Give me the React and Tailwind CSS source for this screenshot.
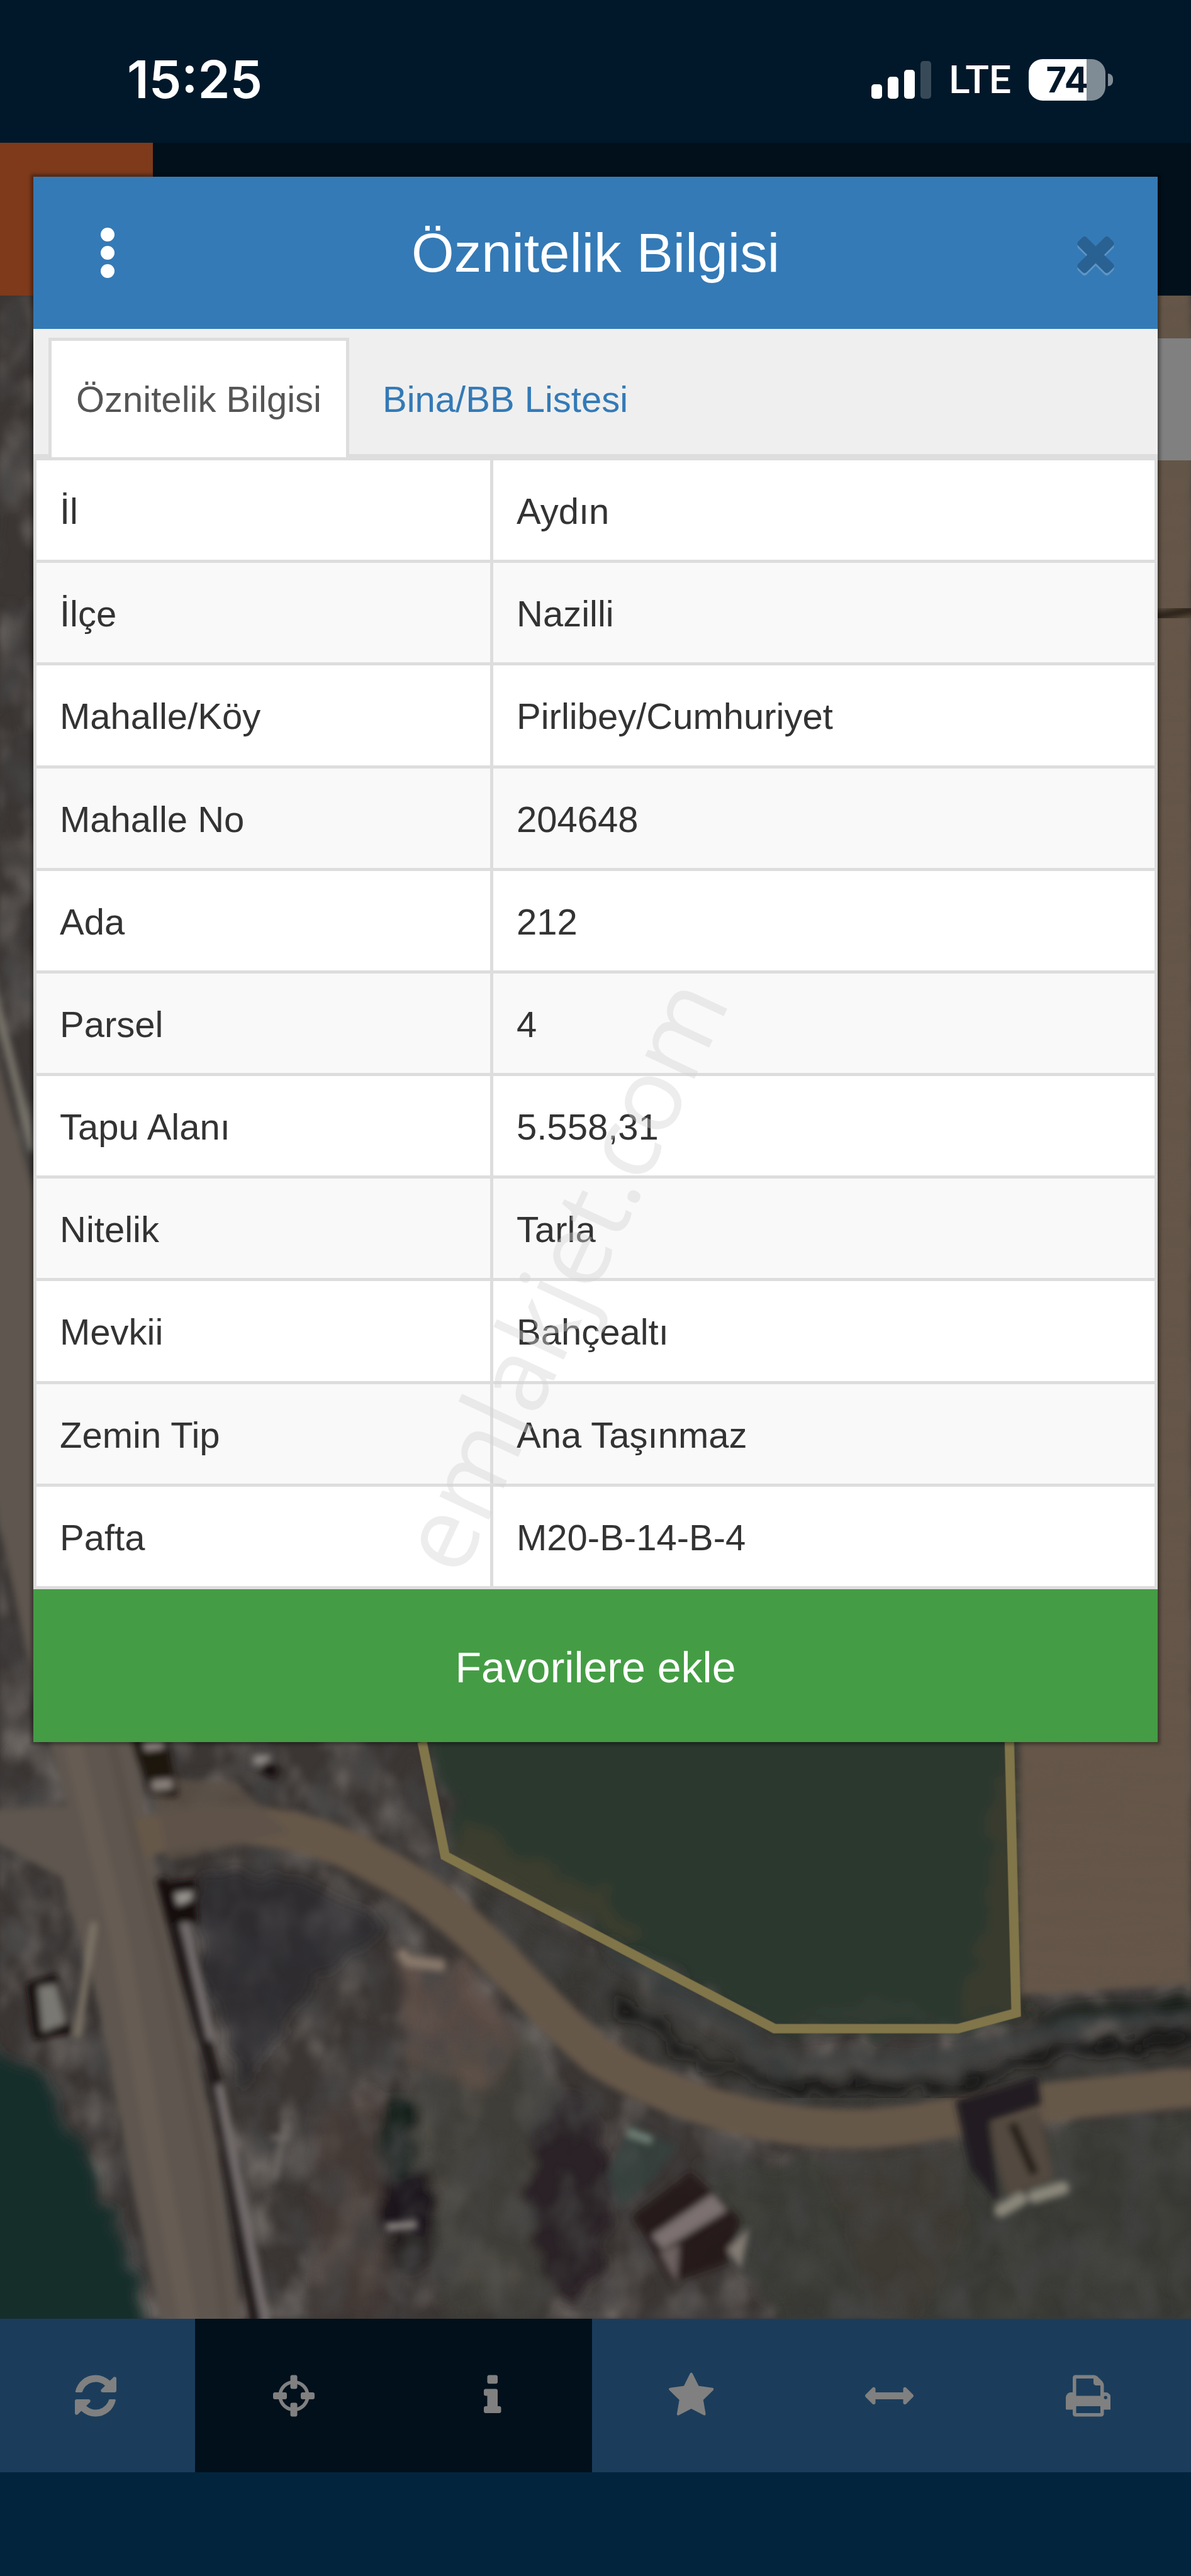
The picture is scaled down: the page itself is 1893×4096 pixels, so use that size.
import React, { useState } from 'react';

const ATTRIBUTES = [
  { label: 'İl', value: 'Aydın' },
  { label: 'İlçe', value: 'Nazilli' },
  { label: 'Mahalle/Köy', value: 'Pirlibey/Cumhuriyet' },
  { label: 'Mahalle No', value: '204648' },
  { label: 'Ada', value: '212' },
  { label: 'Parsel', value: '4' },
  { label: 'Tapu Alanı', value: '5.558,31' },
  { label: 'Nitelik', value: 'Tarla' },
  { label: 'Mevkii', value: 'Bahçealtı' },
  { label: 'Zemin Tip', value: 'Ana Taşınmaz' },
  { label: 'Pafta', value: 'M20-B-14-B-4' },
];

const TOOLS = [
  {
    name: 'Yenile',
    width: 1536,
    active: false,
    path: 'M1511 1056q0 5-1 7-64 268-268 434.5t-478 166.5q-146 0-282.5-55t-243.5-157l-129 129q-19 19-45 19t-45-19-19-45v-448q0-26 19-45t45-19h448q26 0 45 19t19 45-19 45l-137 137q71 66 161 102t187 36q134 0 250-65t186-179q11-17 53-117 8-23 30-23h192q13 0 22.5 9.5t9.5 22.5zm25-800v448q0 26-19 45t-45 19h-448q-26 0-45-19t-19-45 19-45l138-138q-148-137-349-137-134 0-250 65t-186 179q-11 17-53 117-8 23-30 23h-199q-13 0-22.5-9.5t-9.5-22.5v-7q65-268 270-434.5t480-166.5q146 0 284 55.5t245 156.5l130-129q19-19 45-19t45 19 19 45z',
  },
  {
    name: 'Konum',
    width: 1536,
    active: true,
    path: 'M1197 1024h-109q-26 0-45-19t-19-45v-128q0-26 19-45t45-19h109q-32-108-112.5-188.5t-188.5-112.5v109q0 26-19 45t-45 19h-128q-26 0-45-19t-19-45v-109q-108 32-188.5 112.5t-112.5 188.5h109q26 0 45 19t19 45v128q0 26-19 45t-45 19h-109q32 108 112.5 188.5t188.5 112.5v-109q0-26 19-45t45-19h128q26 0 45 19t19 45v109q108-32 188.5-112.5t112.5-188.5zm339-192v128q0 26-19 45t-45 19h-143q-37 161-154.5 278.5t-278.5 154.5v143q0 26-19 45t-45 19h-128q-26 0-45-19t-19-45v-143q-161-37-278.5-154.5t-154.5-278.5h-143q-26 0-45-19t-19-45v-128q0-26 19-45t45-19h143q37-161 154.5-278.5t278.5-154.5v-143q0-26 19-45t45-19h128q26 0 45 19t19 45v143q161 37 278.5 154.5t154.5 278.5h143q26 0 45 19t19 45z',
  },
  {
    name: 'Bilgi',
    width: 640,
    active: true,
    path: 'M640 1344v128q0 26-19 45t-45 19h-512q-26 0-45-19t-19-45v-128q0-26 19-45t45-19h64v-384h-64q-26 0-45-19t-19-45v-128q0-26 19-45t45-19h384q26 0 45 19t19 45v576h64q26 0 45 19t19 45zm-128-1152v192q0 26-19 45t-45 19h-256q-26 0-45-19t-19-45v-192q0-26 19-45t45-19h256q26 0 45 19t19 45z',
  },
  {
    name: 'Favoriler',
    width: 1664,
    active: false,
    path: 'M1664 647q0 22-26 48l-363 354 86 500q1 7 1 20 0 21-10.5 35.5t-30.5 14.5q-19 0-40-12l-449-236-449 236q-22 12-40 12-21 0-31.5-14.5t-10.5-35.5q0-6 2-20l86-500-364-354q-25-27-25-48 0-37 56-46l502-73 225-455q19-41 49-41t49 41l225 455 502 73q56 9 56 46z',
  },
  {
    name: 'Ölçüm',
    width: 1792,
    active: false,
    path: 'M1792 896q0 26-19 45l-256 256q-19 19-45 19t-45-19-19-45v-128h-1024v128q0 26-19 45t-45 19-45-19l-256-256q-19-19-19-45t19-45l256-256q19-19 45-19t45 19 19 45v128h1024v-128q0-26 19-45t45-19 45 19l256 256q19 19 19 45z',
  },
  {
    name: 'Yazdır',
    width: 1664,
    active: false,
    path: 'M384 1536h896v-256h-896v256zm0-640h896v-384h-160q-40 0-68-28t-28-68v-160h-640v640zm1152 64q0-26-19-45t-45-19-45 19-19 45 19 45 45 19 45-19 19-45zm128 0v416q0 13-9.5 22.5t-22.5 9.5h-224v160q0 40-28 68t-68 28h-960q-40 0-68-28t-28-68v-160h-224q-13 0-22.5-9.5t-9.5-22.5v-416q0-79 56.5-135.5t135.5-56.5h64v-544q0-40 28-68t68-28h672q40 0 88 20t76 48l152 152q28 28 48 76t20 88v256h64q79 0 135.5 56.5t56.5 135.5z',
  },
];

const CLOSE_PATH =
  'M1298 1322q0 40-28 68l-136 136q-28 28-68 28t-68-28l-294-294-294 294q-28 28-68 28t-68-28l-136-136q-28-28-28-68t28-68l294-294-294-294q-28-28-28-68t28-68l136-136q28-28 68-28t68 28l294 294 294-294q28-28 68-28t68 28l136 136q28 28 28 68t-28 68l-294 294 294 294q28 28 28 68z';

const App = () => {
  const [activeTab, setActiveTab] = useState('info');

  return (
    <div className="relative flex min-h-screen flex-col overflow-hidden bg-[#02253d] font-['Liberation_Sans',Arial,sans-serif]">
      <StatusBar />

      <div className="flex h-[243px] bg-[#01101b]">
        <div className="w-[243px] bg-[#7e3a1b]"></div>
      </div>

      <main className="relative flex flex-1 flex-col items-end pt-[68px]">
        <SatelliteMap />
        <div className="relative h-[194px] w-[243px] bg-[#808080]"></div>
      </main>

      <Toolbar />
      <div className="h-[165px]"></div>

      {/* ATTRIBUTE MODAL */}
      <div
        role="dialog"
        aria-labelledby="modal-title"
        className="absolute inset-x-[53px] top-[281px] bg-white shadow-[0_0_5px_4px_rgba(0,0,0,0.35)]"
      >
        <header className="flex h-[242px] items-center bg-[#347ab6]">
          <button aria-label="Menü" className="flex w-[236px] flex-col items-center gap-[7px]">
            <span className="size-[22px] rounded-full bg-white"></span>
            <span className="size-[22px] rounded-full bg-white"></span>
            <span className="size-[22px] rounded-full bg-white"></span>
          </button>
          <h1 id="modal-title" className="flex-1 text-center text-[87px] leading-[96px] text-white">
            Öznitelik Bilgisi
          </h1>
          <button aria-label="Kapat" className="flex w-[236px] justify-center pl-[38px]">
            <svg viewBox="0 0 1408 1792" className="h-[88px] w-[69px] shrink-0 overflow-visible">
              <path d={CLOSE_PATH} transform="translate(0 80)" fill="#5d95c5" />
              <path d={CLOSE_PATH} fill="#296192" />
            </svg>
          </button>
        </header>

        <nav className="flex h-[204px] items-end border-b-[5px] border-[#dddddd] bg-[#efefef] pl-[24px]">
          <TabButton active={activeTab === 'info'} onClick={() => setActiveTab('info')}>
            Öznitelik Bilgisi
          </TabButton>
          <TabButton active={activeTab === 'list'} onClick={() => setActiveTab('list')}>
            Bina/BB Listesi
          </TabButton>
        </nav>

        <table className="h-[1800px] w-full table-fixed border-collapse text-left text-[58px] leading-[72px] text-[#333333]">
          <colgroup>
            <col className="w-[726px]" />
            <col />
          </colgroup>
          <tbody>
            {ATTRIBUTES.map((row) => (
              <tr key={row.label} className="odd:bg-white even:bg-[#f9f9f9]">
                <th scope="row" className="border-[5px] border-[#dddddd] px-[37px] pt-[4px] font-normal">{row.label}</th>
                <td className="border-[5px] border-[#dddddd] px-[37px] pt-[4px]">{row.value}</td>
              </tr>
            ))}
          </tbody>
        </table>

        <button className="block h-[243px] w-full bg-[#449d44] pt-[4px] text-[68px] text-white">Favorilere ekle</button>

        <span className="pointer-events-none absolute top-[1744px] left-[837px] -translate-x-1/2 -translate-y-1/2 -rotate-65 font-['Open_Sans',sans-serif] text-[162px] leading-none text-[#d4d4d4]/42">
          emlakjet.com
        </span>
      </div>
    </div>
  );
};

const StatusBar = () => (
  <div className="flex h-[227px] items-center justify-between bg-[#01182a] pt-[26px] pr-[124px] pl-[202px] font-['Inter',sans-serif] text-white">
    <span className="text-[82px] leading-[96px] font-semibold">15:25</span>
    <div className="flex items-center gap-[28px]">
      <svg viewBox="0 0 95 60" className="h-[60px] w-[95px]" fill="#fff">
        <rect x="0" y="37" width="17" height="23" rx="5" />
        <rect x="26" y="25" width="17" height="35" rx="5" />
        <rect x="52" y="14" width="17" height="46" rx="5" />
        <rect x="78" y="0" width="17" height="60" rx="5" opacity="0.22" />
      </svg>
      <span className="font-['Roboto',sans-serif] text-[62px] leading-[72px] font-medium">LTE</span>
      <div className="flex items-center gap-[4px]">
        <div className="flex h-[66px] w-[122px] items-center justify-center rounded-[22px] bg-linear-to-r from-white from-75% to-[#808c95] to-75% text-[56px] leading-none font-bold text-[#01182a]">
          74
        </div>
        <div className="h-[20px] w-[8px] rounded-r-full bg-[#808c95]"></div>
      </div>
    </div>
  </div>
);

const TabButton = ({ active, onClick, children }) => (
  <button
    onClick={onClick}
    className={
      active
        ? '-mb-[5px] h-[190px] border-[5px] border-b-0 border-[#dddddd] bg-white px-[39px] text-[58px] text-[#555555]'
        : '-mb-[5px] ml-[9px] h-[190px] border-[5px] border-b-0 border-transparent px-[39px] text-[58px] text-[#337ab7]'
    }
  >
    {children}
  </button>
);

const Toolbar = () => (
  <div className="bg-[#1b3d5b]">
    <div className="mr-[6px] -ml-[6px] grid h-[244px] grid-cols-6">
      {TOOLS.map((tool) => (
        <button
          key={tool.name}
          aria-label={tool.name}
          className={`flex items-center justify-center ${tool.active ? 'bg-[#01101b]' : ''}`}
        >
          <svg viewBox={`0 0 ${tool.width} 1792`} className="h-[77px] w-auto" fill="#808080">
            <path d={tool.path} />
          </svg>
        </button>
      ))}
    </div>
  </div>
);

// Dimmed aerial view with the selected parcel outlined
const SatelliteMap = () => (
  <svg
    viewBox="0 530 2130 3619"
    preserveAspectRatio="xMidYMid slice"
    className="absolute inset-0 size-full"
    aria-hidden="true"
  >
    <defs>
      <filter id="soft" x="-5%" y="-5%" width="110%" height="110%">
        <feGaussianBlur stdDeviation="6" />
      </filter>
      <filter id="rough" x="-5%" y="-5%" width="110%" height="110%">
        <feTurbulence type="fractalNoise" baseFrequency="0.02" numOctaves="3" seed="4" result="n" />
        <feDisplacementMap in="SourceGraphic" in2="n" scale="60" xChannelSelector="R" yChannelSelector="G" />
        <feGaussianBlur stdDeviation="10" />
      </filter>
      <filter id="grain" x="0" y="0" width="100%" height="100%">
        <feTurbulence type="fractalNoise" baseFrequency="0.016 0.011" numOctaves="3" seed="11" />
        <feColorMatrix values="0 0 0 0 0.06  0 0 0 0 0.06  0 0 0 0 0.06  2.4 0 0 0 -0.95" />
        <feGaussianBlur stdDeviation="4" />
      </filter>
      <filter id="light" x="0" y="0" width="100%" height="100%">
        <feTurbulence type="fractalNoise" baseFrequency="0.014 0.01" numOctaves="3" seed="23" />
        <feColorMatrix values="0 0 0 0 0.4  0 0 0 0 0.36  0 0 0 0 0.33  0 2.2 0 0 -0.95" />
        <feGaussianBlur stdDeviation="5" />
      </filter>
      <filter id="furrow" x="0" y="0" width="100%" height="100%">
        <feTurbulence type="fractalNoise" baseFrequency="0.004 0.05" numOctaves="3" seed="7" />
        <feColorMatrix values="0 0 0 0 0.12  0 0 0 0 0.09  0 0 0 0 0.06  1.8 0 0 0 -0.7" />
      </filter>
    </defs>

    <rect y="530" width="2130" height="3619" fill="#3b3634" />
    <rect y="530" width="2130" height="3619" filter="url(#light)" opacity="0.55" />

    {/* ground cover */}
    <g filter="url(#rough)">
      <path d="M780 3330L1060 3490 1280 3640 1420 3710H1700L2150 3620V3700L1700 3780H1450L1200 3700 1000 3560z" fill="#3a3836" opacity="0.8" />
      <path d="M740 3680L960 3640 1000 3790 980 4149H800L740 3900z" fill="#43443b" opacity="0.6" />
      <path d="M700 3500L830 3510 930 3660 880 3740 740 3700z" fill="#62534a" opacity="0.8" />
      <path d="M560 3780L680 3730 700 4149H560z" fill="#4a3d39" opacity="0.5" />
      <path d="M1250 3880L1700 3840 1900 3800 2160 3780V4180H1400z" fill="#383c35" opacity="0.8" />
      <path d="M1500 3810L1720 3810 1730 3960 1650 4149H1560L1480 3900z" fill="#433c36" opacity="0.5" />
      <ellipse cx="1020" cy="3930" rx="75" ry="180" fill="#2b2427" />
      <ellipse cx="710" cy="3820" rx="40" ry="70" fill="#19231f" />
      <ellipse cx="725" cy="3940" rx="48" ry="60" fill="#1f191a" />
      <ellipse cx="730" cy="4030" rx="40" ry="40" fill="#201a1b" />
    </g>
    <rect y="530" width="2130" height="3619" filter="url(#grain)" opacity="0.75" />
    <g filter="url(#rough)">
      <path d="M-20 3660L60 3700 130 3800 190 3930 280 4190H-60V3640z" fill="#162e29" />
      <path d="M770 3080L820 3320 1395 3640H1725L1830 3610 1825 3080z" fill="#2a372e" />
      <path d="M1770 3180L1820 3120 1832 3610H1710L1770 3420z" fill="#454031" opacity="0.55" />
      <path d="M820 3250L960 3340 1060 3370 1160 3480 1000 3420 830 3340z" fill="#48432f" opacity="0.6" />
      <path d="M1380 3620L1560 3570 1720 3620z" fill="#343c32" opacity="0.8" />
    </g>
    <path d="M1812 520H2130V3550L1990 3560 1825 3570z" fill="#655649" filter="url(#soft)" />
    <rect x="1814" y="520" width="316" height="3030" filter="url(#furrow)" opacity="0.55" />
    <path d="M2060 1106L2140 1090" stroke="#2a2118" strokeWidth="18" filter="url(#soft)" />

    {/* roads */}
    <g filter="url(#soft)">
      <path d="M-20 1840L80 2200 150 2800 235 3100 280 3340 335 3600 390 3850 435 4169H290L225 3850 180 3600 110 3360 -20 3290V3240L120 3230 70 3060 -20 2640z" fill="#5f564f" />
      <path d="M130 3120L210 3450 270 3800 340 4169" stroke="#6b6256" strokeWidth="34" fill="none" opacity="0.55" />
      <path d="M200 3120L290 3500 370 3900 405 4169" stroke="#544b47" strokeWidth="16" fill="none" opacity="0.6" />
      <path d="M-20 1740L60 2060" stroke="#7a776d" strokeWidth="14" fill="none" />
      <path d="M250 3290C420 3240 560 3270 680 3340C840 3420 930 3560 1070 3680C1230 3780 1440 3830 1640 3800C1800 3770 1900 3755 2140 3735" stroke="#66584a" strokeWidth="70" fill="none" />
      <path d="M270 3180L420 3190 520 3280 300 3330z" fill="#5d5147" opacity="0.8" />
    </g>
    <g filter="url(#rough)">
      <path d="M1090 3480L1250 3590 1400 3690H1710L1870 3630 2150 3595" stroke="#37403d" strokeWidth="34" fill="none" opacity="0.8" />
      <path d="M1090 3580L1260 3690 1430 3735H1710L1880 3670 2150 3645" stroke="#171312" strokeWidth="20" fill="none" />
      <path d="M1130 3530L1300 3640 1430 3700H1700L1870 3650" stroke="#55524f" strokeWidth="14" fill="none" opacity="0.6" />
      <path d="M1840 3605L2150 3585" stroke="#131a16" strokeWidth="22" fill="none" />
      <path d="M345 3370C440 3320 640 3390 690 3450L580 3520 440 3730 370 3560z" fill="#27292b" opacity="0.6" />
    </g>

    {/* walls, sheds and houses */}
    <g filter="url(#soft)">
      <path d="M288 3360L385 3720 460 4169" stroke="#1d1512" strokeWidth="20" fill="none" />
      <path d="M330 3440L378 3650M392 3730L478 4169" stroke="#77706f" strokeWidth="15" fill="none" />
      <path d="M168 3440L138 3645" stroke="#81786a" strokeWidth="12" fill="none" />
      <path d="M46 3550L100 3530 130 3640 60 3650z" fill="#15100e" />
      <path d="M68 3555L100 3550 118 3620 76 3636z" fill="#7a7872" />
      <path d="M236 3110H300L318 3215 268 3210z" fill="#1b1211" />
      <path d="M258 3125L292 3120M272 3195L308 3192" stroke="#8a817c" strokeWidth="18" />
      <path d="M286 3370L350 3360 355 3440 300 3440z" fill="#15110f" />
      <path d="M312 3388L345 3384 342 3400 318 3410z" fill="#9a9591" />
      <path d="M455 3140L485 3140 480 3160 452 3158z" fill="#8e8985" />
      <path d="M470 3160L495 3175" stroke="#16110f" strokeWidth="22" />
      <path d="M485 3825H520M512 3800L490 3900" stroke="#6f6a66" strokeWidth="9" fill="none" />
      <path d="M715 3490L730 3510 795 3518" stroke="#87786b" strokeWidth="20" fill="none" />
      <path d="M690 3985L745 3980" stroke="#88827f" strokeWidth="14" fill="none" />
      <path d="M1130 3965L1235 3885 1325 3970 1300 4050 1200 4085z" fill="#251b18" opacity="0.9" />
      <path d="M1165 4000L1275 3925 1300 3955 1185 4025z" fill="#7b7170" />
      <path d="M1180 4030L1215 4015 1210 4085z" fill="#6d6260" />
      <path d="M1300 4025L1340 3985 1325 4060z" fill="#837b74" />
      <path d="M1085 3890L1130 3800 1210 3840 1170 3900 1110 3950z" fill="#34413f" opacity="0.7" />
      <path d="M1122 3815L1165 3830" stroke="#6f8077" strokeWidth="14" />
      <path d="M1765 3800L1860 3775 1885 3900 1800 3930z" fill="#524a40" />
      <path d="M1708 3758L1855 3715 1862 3766 1770 3796 1786 3945 1735 3880z" fill="#211e23" />
      <path d="M1810 3800L1850 3890" stroke="#211b12" strokeWidth="16" />
      <path d="M1790 3955L1825 3935M1850 3930L1900 3915" stroke="#8a877a" strokeWidth="24" strokeLinecap="round" />
    </g>

    <path
      d="M755 3117L796 3321 1385 3630H1713L1817 3602 1805 3117"
      fill="none"
      stroke="#81754a"
      strokeWidth="17"
    />
  </svg>
);

export default App;
